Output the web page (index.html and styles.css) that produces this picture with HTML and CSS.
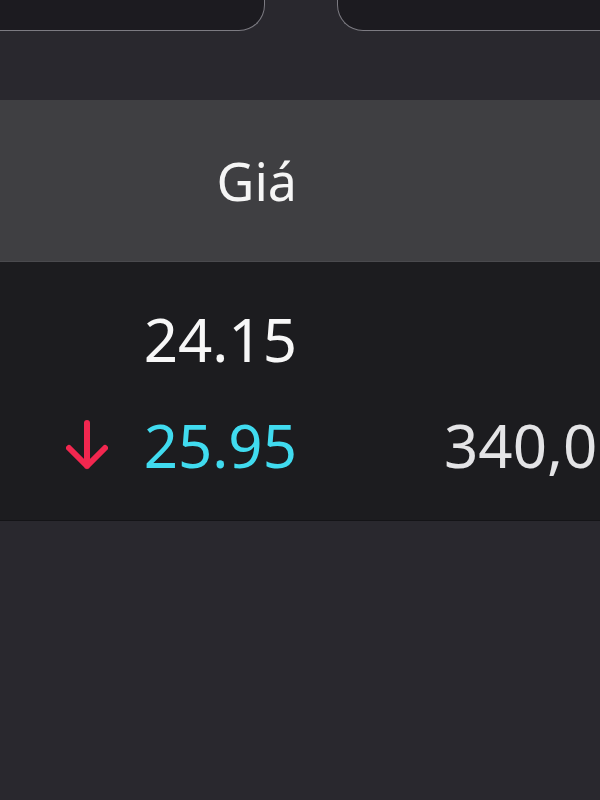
FILE: index.html
```html
<!DOCTYPE html>
<html lang="vi">
<head>
    <meta charset="UTF-8">
    <meta name="viewport" content="width=device-width, initial-scale=1.0">
    <title>Bảng giá</title>
    <link rel="stylesheet" href="styles.css">
</head>
<body>
    <div class="screen">
        <div class="tabs">
            <div class="tab tab-left"></div>
            <div class="tab tab-right"></div>
        </div>

        <div class="price-head">
            <div class="col-price">Giá</div>
            <div class="col-vol"></div>
        </div>

        <div class="price-body">
            <div class="row">
                <div class="col-price">
                    <span class="num">24.15</span>
                </div>
                <div class="col-vol"></div>
            </div>
            <div class="row">
                <div class="col-price">
                    <svg class="arrow-down" width="42" height="50" viewBox="0 0 42 50">
                        <path d="M21 3 V46 M3 28 L21 46 L39 28" fill="none" stroke="#f2274f" stroke-width="6" stroke-linecap="round" stroke-linejoin="round"/>
                    </svg>
                    <span class="num down">25.95</span>
                </div>
                <div class="col-vol">340,000</div>
            </div>
        </div>
    </div>
</body>
</html>
```

FILE: styles.css
```css
body {
    margin: 0;
    padding: 0;
    background: #29282e;
    font-family: 'Noto Sans', 'Open Sans', sans-serif;
    color: #f5f5f5;
}

.screen {
    width: 600px;
    height: 800px;
    overflow: hidden;
    background: #29282e;
}

.tabs {
    display: flex;
    justify-content: space-between;
    height: 100px;
}

.tab {
    height: 30px;
    background: #1c1b20;
    border-bottom: 1.5px solid #7c7b82;
}

.tab-left {
    width: 264px;
    border-right: 1.5px solid #7c7b82;
    border-bottom-right-radius: 26px;
}

.tab-right {
    width: 262px;
    border-left: 1.5px solid #7c7b82;
    border-bottom-left-radius: 26px;
}

.price-head {
    display: flex;
    height: 161px;
    line-height: 161px;
    background: #3f3f42;
    border-bottom: 1px solid #4a4a4e;
    font-size: 52px;
}

.col-price {
    flex: 0 0 297px;
    display: flex;
    justify-content: flex-end;
    align-items: center;
    gap: 36px;
}

.col-vol {
    flex: 0 0 auto;
    padding-left: 147px;
    white-space: nowrap;
    color: #e4e4e6;
}

.price-body {
    background: #1c1c1f;
    border-bottom: 1px solid #141417;
    padding: 41px 0 39px;
    display: flex;
    flex-direction: column;
    gap: 34px;
}

.row {
    display: flex;
    height: 72px;
    line-height: 72px;
    font-size: 60px;
}

.num {
    color: #f7f7f7;
}

.num.down {
    color: #40dbef;
}

.arrow-down {
    display: block;
}
```
